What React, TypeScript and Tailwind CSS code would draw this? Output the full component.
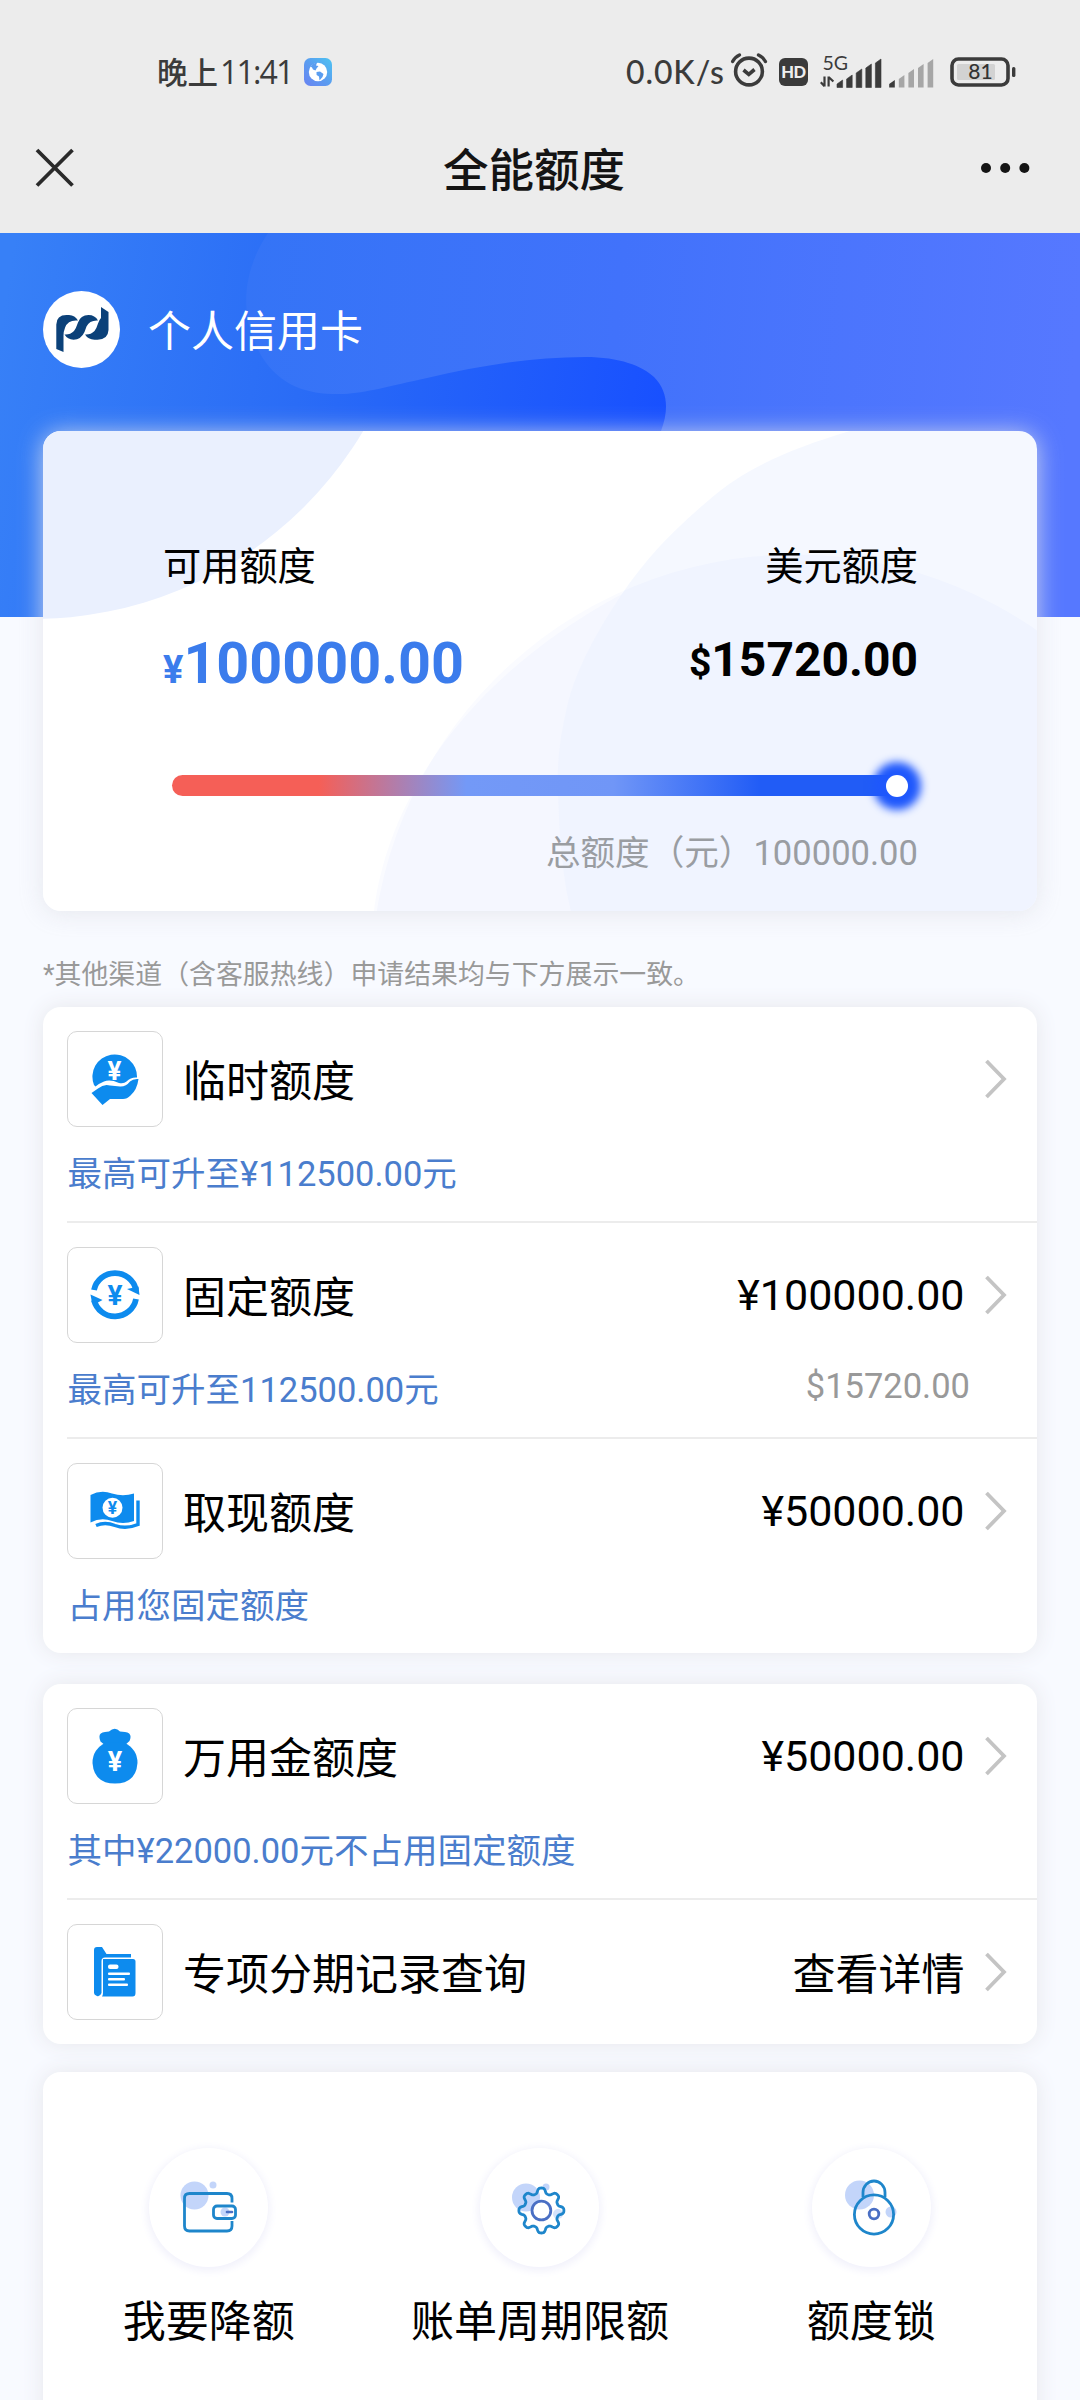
import React from "react";

const BLUE = "#0d8bee";

function YenMark({ x, y, size, fill }: { x: number; y: number; size: number; fill: string }) {
  return (
    <text
      x={x}
      y={y}
      fontSize={size}
      fill={fill}
      textAnchor="middle"
      fontWeight={700}
      fontFamily="Roboto, sans-serif"
    >
      ¥
    </text>
  );
}

function GlobeIcon() {
  return (
    <svg width="28" height="28" viewBox="0 0 28 28">
      <defs>
        <linearGradient id="globe" x1="0" y1="1" x2="1" y2="0">
          <stop offset="0" stopColor="#6a83f2" />
          <stop offset="0.5" stopColor="#5a9df0" />
          <stop offset="1" stopColor="#4cc4f2" />
        </linearGradient>
      </defs>
      <rect width="28" height="28" rx="6.5" fill="url(#globe)" />
      <circle cx="14" cy="14" r="9.2" fill="#fff" />
      <path d="M6.500 8.500 Q9 5 13 4.800 L12 7.500 L14.500 8 L12.500 10.500 L11.500 12.500 L9 11.500 L8 9.500 Z" fill="#5a9df0" />
      <path d="M12.500 14 L16 13.600 L19.500 16 L18.500 19 L15.500 22.500 L15 18.500 L12.600 17 Z" fill="#5a9df0" />
    </svg>
  );
}

function AlarmIcon() {
  return (
    <svg width="38" height="36" viewBox="0 0 38 36" fill="none" stroke="#3b3b3b" strokeLinecap="round">
      <circle cx="19" cy="19.5" r="13.4" strokeWidth="3.6" />
      <path d="M13.5 18 L18.8 22.3 L24.5 17.5" strokeWidth="3.6" strokeLinecap="butt" />
      <path d="M2.6 9.5 Q5 5 9.5 3" strokeWidth="3.4" />
      <path d="M28.5 3 Q33 5 35.4 9.5" strokeWidth="3.4" />
    </svg>
  );
}

function SignalIcons() {
  const tops = [22, 17, 11, 6, 1];
  return (
    <svg width="120" height="50" viewBox="0 -6 120 50">
      <text x="2.5" y="16.5" fontSize="19.5" fontFamily="Lato, sans-serif" fill="#3b3b3b">
        5G
      </text>
      <g stroke="#3b3b3b" strokeWidth="2.2" fill="none">
        <path d="M4.5 23.5 V33.5 M0.8 29.2 L4.5 33.2" />
        <path d="M8.6 33.5 V23.5 M8.6 24 L13.4 28.5" />
      </g>
      {tops.map((t, i) => (
        <path key={t} d={`M${17 + i * 9.6} 34.5 V${t + 9} L${22.6 + i * 9.6} ${t + 5} V34.5 Z`} fill="#3b3b3b" stroke="#3b3b3b" strokeWidth="0.6" strokeLinejoin="round" />
      ))}
      {tops.map((t, i) => (
        <path key={t} d={`M${69.2 + i * 9.6} 34.5 V${t + 9} L${74.8 + i * 9.6} ${t + 5} V34.5 Z`} fill={i === 0 ? "#3b3b3b" : "#a6a6a6"} />
      ))}
    </svg>
  );
}

function BatteryIcon() {
  return (
    <svg width="66" height="30" viewBox="0 0 66 30">
      <rect x="2" y="2" width="56" height="26" rx="6.5" fill="none" stroke="#3b3b3b" strokeWidth="3.6" />
      <rect x="7" y="7" width="38" height="16" rx="1.5" fill="#d2d2d2" />
      <rect x="62" y="10" width="3.4" height="10" rx="1.5" fill="#3b3b3b" />
      <text x="30.5" y="22.2" fontSize="21" textAnchor="middle" fontFamily="Lato, sans-serif" fontWeight={500} fill="#333">
        81
      </text>
    </svg>
  );
}

function StatusBar() {
  return (
    <div className="flex h-[102px] items-start pl-[157px] pr-[64px] pt-[52px] text-[#3b3b3b]">
      <div className="flex h-[40px] items-center font-['Noto_Sans','Noto_Sans_CJK_SC',sans-serif] text-[31px] leading-none font-medium">
        <span className="w-[63px] whitespace-nowrap text-[30.5px]">晚上</span>
        <span className="w-[84px] font-['Open_Sans',sans-serif] text-[32px] tracking-[-1.8px]">11:41</span>
        <GlobeIcon />
      </div>
      <div className="ml-auto flex h-[40px] items-center">
        <span className="w-[99px] font-['Lato',sans-serif] text-[32px] leading-none font-medium tracking-[0.9px] whitespace-nowrap">0.0K/s</span>
        <div className="ml-[5px] mb-[4px] h-[36px]"><AlarmIcon /></div>
        <div className="ml-[11px] flex h-[28px] w-[29px] items-center justify-center rounded-[6px] bg-[#3b3b3b] font-['Lato',sans-serif] text-[16.500px] leading-none font-black tracking-[-0.500px] text-[#eee]">
          HD
        </div>
        <div className="ml-[12px] h-[50px]"><SignalIcons /></div>
        <div className="ml-[10px] h-[30px]"><BatteryIcon /></div>
      </div>
    </div>
  );
}

function NavBar() {
  return (
    <div className="flex h-[131px] items-center justify-between pr-[50px] pl-[34px]">
      <svg width="42" height="42" viewBox="0 0 42 42" className="mb-[1px]">
        <path d="M3 4 L38.5 39.5 M38.5 4 L3 39.5" stroke="#2a2a2a" strokeWidth="3.800" />
      </svg>
      <h1 className="mr-[-6px] ml-[6px] pt-[9px] text-[45.5px] leading-none font-medium text-[#141414]">全能额度</h1>
      <svg width="50" height="12" viewBox="0 0 50 12" fill="#141414" className="mt-[1px]">
        <circle cx="6" cy="6" r="5" />
        <circle cx="25.2" cy="6" r="5" />
        <circle cx="44.4" cy="6" r="5" />
      </svg>
    </div>
  );
}

function HeroBackdrop() {
  return (
    <svg className="absolute inset-0" width="1080" height="384" viewBox="0 233 1080 384">
      <defs>
        <linearGradient id="deep" gradientUnits="userSpaceOnUse" x1="0" y1="330" x2="667" y2="430">
          <stop offset="0" stopColor="#3780f7" />
          <stop offset="0.45" stopColor="#2a6cf6" />
          <stop offset="1" stopColor="#1850ff" />
        </linearGradient>
        <linearGradient id="light" gradientUnits="userSpaceOnUse" x1="246" y1="233" x2="1080" y2="300">
          <stop offset="0" stopColor="#3474f6" />
          <stop offset="0.45" stopColor="#4172fb" />
          <stop offset="1" stopColor="#5678ff" />
        </linearGradient>
      </defs>
      <rect y="233" width="1080" height="384" fill="url(#deep)" />
      <path
        d="M268 233 C240 275 240 320 262 357 C282 388 310 395 344 394 C365 393 390 386 427 378 C480 366 530 357 585 357 C620 357 642 366 654 377 C668 391 669 410 661 431 L661 617 H1080 V233 Z"
        fill="url(#light)"
      />
    </svg>
  );
}

function BankLogo() {
  return (
    <svg width="77" height="77" viewBox="6.5 6.5 77 77">
      <circle cx="45" cy="45" r="38.5" fill="#fff" />
      <g fill="#0b4179">
        <path d="M19.8 64.5 V40 Q20 30.5 30 30.5 H32.5 Q38.5 30.8 41.5 36 Q31.500 35 28.600 43 Q27 47 27 51 V67.500 Z" />
        <path d="M28 50 Q33.500 50.500 37.500 46.500 Q39.500 44 41.500 38 Q44 30.700 52 30.500 Q58.500 30.500 61.500 36 Q53 35.500 50 42 L48 47.500 Q44.500 55.200 37 55.200 Q31 55 28 50 Z" />
        <path d="M48.500 50 Q54 50.500 58 46.500 Q60 44 61.500 39 Q62.500 35.500 64.500 33.500 V22.500 L72 27.500 V45.500 Q71.500 55.200 61 55.200 H58 Q51.500 55 48.500 50 Z" />
      </g>
    </svg>
  );
}

function BalanceCard() {
  return (
    <section className="relative mx-[43px] mt-[63px] h-[480px] overflow-hidden rounded-[18px] bg-white">
      <svg className="absolute inset-0" width="994" height="480" viewBox="43 431 994 480">
        <circle cx="33" cy="235" r="384" fill="#eaf0fe" />
        <path
          d="M850 431 C790 449 745 468 709 500 C672 531 645 560 622 594 C595 634 575 672 567 707 C559 742 557 765 558 790 C559 835 563 880 571 911 H1037 V431 Z"
          fill="#1e64fa"
          fillOpacity="0.042"
        />
        <circle cx="795" cy="978" r="423.500" fill="#1e64fa" fillOpacity="0.022" />
        <path d="M374 911 C385 820 445 690 622 594 C595 634 575 672 567 707 C559 742 557 765 558 790 C559 835 563 880 571 911 Z" fill="#1e64fa" fillOpacity="0.022" />
      </svg>
      <div className="relative pt-[116px] pr-[120px] pl-[120px]">
        <div className="flex justify-between text-[38.200px] leading-[40px] text-black">
          <span>可用额度</span>
          <span className="mr-[-1px]">美元额度</span>
        </div>
        <div className="mt-[42px] flex h-[70px] items-baseline justify-between font-bold">
          <span className="text-[#3b7cec]">
            <span className="text-[38px] leading-none">¥</span>
            <span className="text-[57.500px] leading-[70px]">100000.00</span>
          </span>
          <span className="relative -top-[7px] mr-[-1px] text-black">
            <span className="text-[39px] leading-none">$</span>
            <span className="text-[48px] leading-none">15720.00</span>
          </span>
        </div>
        <div className="mt-[76px] mr-[9px] ml-[8.500px] flex h-[21px] items-center justify-end rounded-full bg-[linear-gradient(90deg,#f55f57_0%,#f55f57_20%,#7399f7_40%,#7096f7_60%,#215cf6_80%,#215cf6_100%)]">
          <i className="block size-[22px] rounded-full bg-white shadow-[0_0_9px_13px_#1f58fc]" />
        </div>
        <p className="mt-[39px] mr-[-1px] text-right text-[34.600px] leading-[36px] text-[#9a9da2]">总额度（元）100000.00</p>
      </div>
    </section>
  );
}

function HandCoinIcon() {
  return (
    <svg width="50" height="54" viewBox="0 0 50 54">
      <path d="M4 33 A22.300 22.300 0 1 1 47 25.500 Q41 25 36.500 29.500 Q34 32 29 31 Q20 27 14 29.500 Q9 31.500 5.500 34.500 Z" fill={BLUE} />
      <path d="M1.500 41 L8 36.500 Q14 31.500 20 33.500 L30 34.500 Q36 34.800 40 29.500 Q43 26.500 48.500 27 Q47 38 40.500 43.500 Q37 47 33 47 L20 47 L12.500 53 Z" fill={BLUE} />
      <YenMark x={24.5} y={27.5} size={26} fill="#fff" />
    </svg>
  );
}

function CycleIcon() {
  return (
    <svg width="50" height="50" viewBox="0 0 50 50">
      <g fill="none" stroke={BLUE} strokeWidth="5.800">
        <path d="M4 20 A21.500 21.500 0 0 1 46 20" />
        <path d="M46 29 A21.500 21.500 0 0 1 4 30" />
      </g>
      <path d="M37 19 L48.500 16.500 L49.500 25 Z" fill={BLUE} />
      <path d="M0.500 24.500 L12.500 30 L7 33 L2 33 Z" fill={BLUE} />
      <YenMark x={25} y={35} size={28} fill={BLUE} />
    </svg>
  );
}

function BanknoteIcon() {
  return (
    <svg width="50" height="40" viewBox="0 0 50 40">
      <path d="M0.500 4 Q11 -1.500 22 2.500 Q33 6 44 2.500 V30 Q33 34 22 30 Q11 26 0.500 31.500 Z" fill={BLUE} />
      <path d="M6 34.500 Q15 30.500 25 34.500 Q36 38.500 48 33.500 V9.500" fill="none" stroke={BLUE} strokeWidth="3.400" />
      <circle cx="22.500" cy="16.800" r="10" fill="#fff" />
      <YenMark x={22.5} y={23} size={17.5} fill={BLUE} />
    </svg>
  );
}

function MoneyBagIcon() {
  return (
    <svg width="46" height="56" viewBox="0 0 46 56">
      <path d="M14 18 L8.500 13.500 Q5 4.500 13 4 L17 3.600 Q23 -2 28 3.600 L33 4 Q41 5 37.500 13 L32 18 Z" fill={BLUE} />
      <path d="M14 14.500 Q0.500 21 0.500 35 Q2 55.500 23 55.500 Q44 55.500 45.500 35 Q45.500 21 32 14.500 Z" fill={BLUE} />
      <YenMark x={23} y={43} size={27} fill="#fff" />
    </svg>
  );
}

function RecordIcon() {
  return (
    <svg width="42" height="50" viewBox="0 0 42 50">
      <path d="M0 3 Q0 0 3 0 H8 L12.500 7 H37 V10.500 H11 Q7.500 10.500 7.500 14 V46 Q6 50 3 49 Q0 48 0 46 Z" fill={BLUE} />
      <path d="M9 12 H39 Q41.500 12 41.500 14.500 V46 Q41.500 49.500 38.500 49.500 H8 Q9 48 9 46 Z" fill={BLUE} />
      <g fill="#fff">
        <rect x="14" y="17.500" width="10.500" height="4.500" rx="2" />
        <rect x="14" y="25.500" width="22" height="2.600" rx="1" />
        <rect x="14" y="31" width="17" height="2.600" rx="1" />
        <rect x="14" y="36.500" width="20" height="2.600" rx="1" />
      </g>
    </svg>
  );
}

type RowProps = {
  icon: React.ReactNode;
  title: string;
  value?: string;
  note?: string;
  extra?: string;
  divider?: boolean;
};

function LimitRow({ icon, title, value, note, extra, divider }: RowProps) {
  return (
    <div className={divider ? "ml-[24px] border-b-[2px] border-[#ececec] pt-[24px]" : "ml-[24px] pt-[24px]"}>
      <div className="flex h-[96px] items-center pr-[30px]">
        <div className="flex size-[96px] items-center justify-center rounded-[10px] border border-[#d6d6d6]">{icon}</div>
        <span className="ml-[20px] pt-[6px] text-[43px] leading-[50px] text-black">{title}</span>
        <span className={value === "查看详情" ? "ml-auto pt-[6px] text-[43px] leading-[50px] text-black" : "ml-auto text-[43px] leading-[50px] text-black"}>
          {value}
        </span>
        <svg width="22" height="40" viewBox="0 0 22 40" className="ml-[20.500px]">
          <path d="M1.500 2 L19 20 L1.500 38" fill="none" stroke="#c4c4c4" strokeWidth="3.800" />
        </svg>
      </div>
      {note && (
        <div className="flex h-[94px] items-center justify-between pr-[67px] pl-[0.500px] text-[34.500px] leading-[40px]">
          <span className="text-[#4a7dcd]">{note}</span>
          <span className="pb-[8px] text-[#999]">{extra}</span>
        </div>
      )}
      {!note && <div className="h-[24px]" />}
    </div>
  );
}

function Panel({ className, children }: { className: string; children: React.ReactNode }) {
  return <section className={"mx-[43px] rounded-[18px] bg-white shadow-[0_0_22px_#e6e7eb] " + className}>{children}</section>;
}

function WalletIcon() {
  return (
    <svg width="60" height="56" viewBox="0 0 60 56" fill="none">
      <circle cx="15.500" cy="15.500" r="14" fill="#c3d5fa" />
      <circle cx="34" cy="5" r="3.500" fill="#c3d5fa" />
      <path d="M53 22.500 V18.500 Q53 13.500 48 13.500 H10.500 Q5.500 13.500 5.500 18.500 V46 Q5.500 51 10.500 51 H48 Q53 51 53 46 V41" stroke="#1e86cb" strokeWidth="2.800" />
      <circle cx="46" cy="32" r="4.500" fill="#c3d5fa" />
      <rect x="34.500" y="26" width="22" height="12.500" rx="3.500" stroke="#1e86cb" strokeWidth="2.800" />
      <path d="M48 32 H53" stroke="#4a6fc4" strokeWidth="2.600" strokeLinecap="round" />
    </svg>
  );
}

// Eight-toothed outline; each tooth spans 45 degrees around the hub.
const gearPath = (() => {
  const steps = 128;
  const pts: string[] = [];
  for (let i = 0; i < steps; i++) {
    const a = (i / steps) * Math.PI * 2;
    const wave = Math.tanh(1.7 * Math.cos(a * 8)) / Math.tanh(1.7);
    const r = 19.9 + 2.6 * wave;
    pts.push(`${(31.4 + r * Math.sin(a)).toFixed(2)} ${(30.5 - r * Math.cos(a)).toFixed(2)}`);
  }
  return "M" + pts.join(" L") + " Z";
})();

function GearIcon() {
  return (
    <svg width="60" height="56" viewBox="0 0 60 56" fill="none">
      <circle cx="16" cy="17.500" r="14" fill="#c3d5fa" />
      <circle cx="36" cy="7" r="3.500" fill="#c3d5fa" />
      <circle cx="48" cy="34" r="5" fill="#d3e2fb" />
      <path d={gearPath} stroke="#1e86cb" strokeWidth="2.800" strokeLinejoin="round" />
      <circle cx="31.400" cy="30.500" r="9.400" stroke="#4a6fc4" strokeWidth="2.800" fill="#fff" />
    </svg>
  );
}

function LockIcon() {
  return (
    <svg width="60" height="58" viewBox="0 0 60 58" fill="none">
      <circle cx="18.500" cy="16" r="14.500" fill="#c3d5fa" />
      <circle cx="50" cy="33" r="5.500" fill="#c3d5fa" />
      <circle cx="33" cy="35.500" r="19.600" stroke="#1e86cb" strokeWidth="2.800" />
      <path d="M22 18 V13.500 A11 11.500 0 0 1 44 13.500 V18" stroke="#1e86cb" strokeWidth="2.800" />
      <circle cx="33" cy="35" r="4.800" stroke="#4a6fc4" strokeWidth="2.800" />
    </svg>
  );
}

function Shortcut({ icon, label }: { icon: React.ReactNode; label: string }) {
  return (
    <div className="flex flex-1 flex-col items-center">
      <div className="flex size-[119px] items-center justify-center rounded-full bg-white shadow-[0_2px_8px_2px_#f1f1fb]">{icon}</div>
      <span className="mt-[30px] text-[43px] leading-[50px] whitespace-nowrap text-black">{label}</span>
    </div>
  );
}

export default function App() {
  return (
    <main className="h-[2400px] w-[1080px] overflow-hidden bg-[#f8faff] font-['Roboto','Noto_Sans_CJK_SC',sans-serif]">
      <header className="h-[233px] bg-[#ececec]">
        <StatusBar />
        <NavBar />
      </header>
      <div className="relative">
        <div className="absolute inset-x-0 top-0 h-[384px] overflow-hidden">
          <HeroBackdrop />
        </div>
        <div className="relative flex items-center pt-[58px] pl-[43px]">
          <BankLogo />
          <span className="ml-[28px] pt-[4px] text-[43px] leading-[50px] text-white">个人信用卡</span>
        </div>
        <div className="absolute top-[198px] right-[43px] left-[43px] h-[480px] rounded-[18px] shadow-[0_2px_24px_rgba(226,228,234,0.85)]" />
        <BalanceCard />
      </div>
      <p className="mt-[45px] ml-[43px] h-[51px] text-[26.900px] leading-[38px] text-[#999]">*其他渠道（含客服热线）申请结果均与下方展示一致。</p>
      <Panel className="h-[646px]">
        <LimitRow divider icon={<HandCoinIcon />} title="临时额度" note="最高可升至¥112500.00元" />
        <LimitRow divider icon={<CycleIcon />} title="固定额度" value="¥100000.00" note="最高可升至112500.00元" extra="$15720.00" />
        <LimitRow icon={<BanknoteIcon />} title="取现额度" value="¥50000.00" note="占用您固定额度" />
      </Panel>
      <Panel className="mt-[31px] h-[360px]">
        <LimitRow divider icon={<MoneyBagIcon />} title="万用金额度" value="¥50000.00" note="其中¥22000.00元不占用固定额度" />
        <LimitRow icon={<RecordIcon />} title="专项分期记录查询" value="查看详情" />
      </Panel>
      <Panel className="mt-[28px] h-[400px]">
        <div className="flex pt-[76px]">
          <Shortcut icon={<WalletIcon />} label="我要降额" />
          <Shortcut icon={<GearIcon />} label="账单周期限额" />
          <Shortcut icon={<LockIcon />} label="额度锁" />
        </div>
      </Panel>
    </main>
  );
}
